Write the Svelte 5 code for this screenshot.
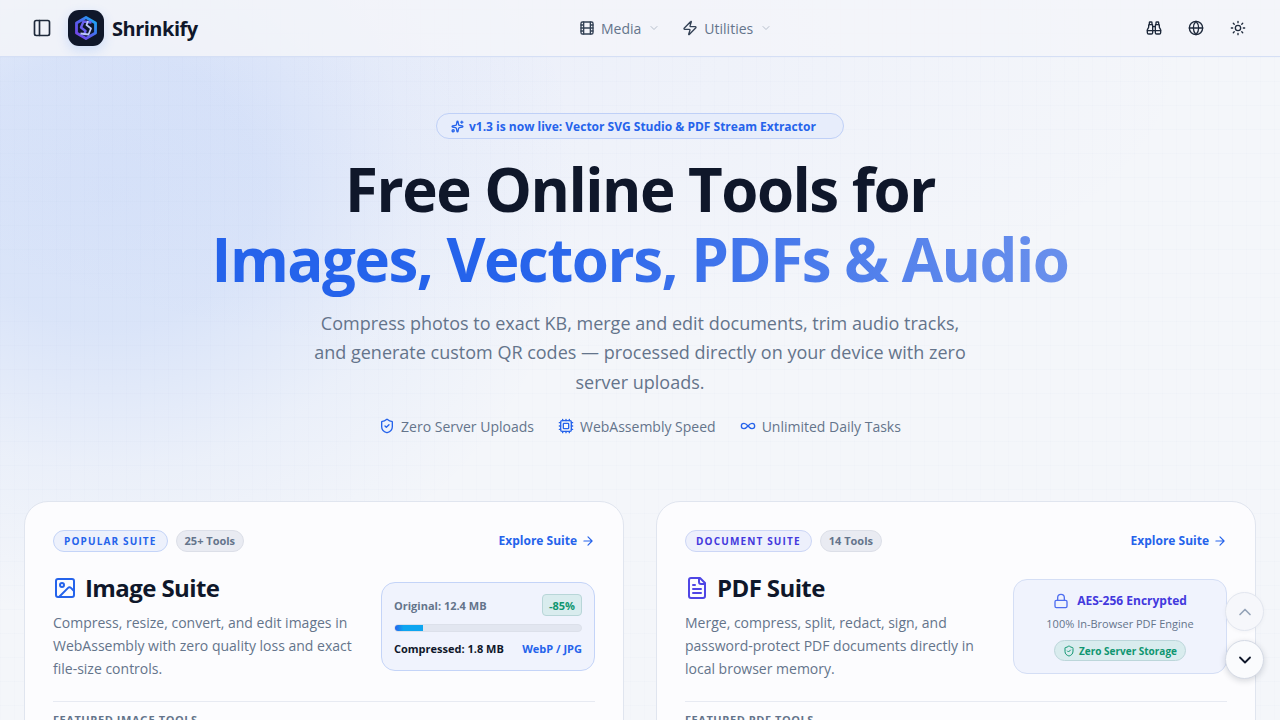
<script>
  const chips = [
    { label: 'Zero Server Uploads', icon: 'shield' },
    { label: 'WebAssembly Speed', icon: 'cpu' },
    { label: 'Unlimited Daily Tasks', icon: 'inf' }
  ];
</script>

<div class="page">
  <header class="topbar">
    <div class="left">
      <button class="iconbtn sidebar" aria-label="Toggle sidebar">
        <svg width="20" height="20" viewBox="0 0 24 24" fill="none" stroke="currentColor" stroke-width="2" stroke-linecap="round" stroke-linejoin="round"><rect x="3" y="3" width="18" height="18" rx="2"/><path d="M9 3v18"/></svg>
      </button>
      <div class="logo">
        <svg width="26" height="26" viewBox="0 0 26 26" fill="none" stroke-linejoin="round">
          <defs>
            <linearGradient id="lg" x1="0" y1="1" x2="1" y2="0"><stop offset="0" stop-color="#7a3fe4"/><stop offset="0.5" stop-color="#4f63ee"/><stop offset="1" stop-color="#12b4f6"/></linearGradient>
          </defs>
          <path d="M13 2.500 22.500 8V18L13 23.500 3.500 18V8Z" stroke="url(#lg)" stroke-width="2.800"/>
          <path d="M18.500 7.500 10.500 6.500 8 12.500 12.500 16 11 20" stroke="#6a60ee" stroke-width="2.400"/>
          <path d="M7.500 18.500 15.500 19.500 18 13.500 13.500 10 15 6" stroke="#bcc8fb" stroke-width="1.800"/>
        </svg>
      </div>
      <span class="brand">Shrinkify</span>
    </div>
    <nav class="nav">
      <button class="navitem">
        <svg width="16" height="16" viewBox="0 0 24 24" fill="none" stroke="currentColor" stroke-width="2" stroke-linecap="round" stroke-linejoin="round" class="navicon"><rect x="3" y="3" width="18" height="18" rx="2"/><path d="M7 3v18M17 3v18M3 12h18M3 7.500h4M3 16.500h4M17 7.500h4M17 16.500h4"/></svg>
        <span>Media</span>
        <svg class="chev" width="12" height="12" viewBox="0 0 24 24" fill="none" stroke="currentColor" stroke-width="2" stroke-linecap="round" stroke-linejoin="round"><path d="m6 9 6 6 6-6"/></svg>
      </button>
      <button class="navitem">
        <svg width="16" height="16" viewBox="0 0 24 24" fill="none" stroke="currentColor" stroke-width="2" stroke-linecap="round" stroke-linejoin="round" class="navicon"><path d="M4 14a1 1 0 0 1-.780-1.630l9.900-10.200a.500.500 0 0 1 .860.460l-1.920 6.020A1 1 0 0 0 13 10h7a1 1 0 0 1 .780 1.630l-9.900 10.200a.500.500 0 0 1-.860-.460l1.920-6.020A1 1 0 0 0 11 14z"/></svg>
        <span>Utilities</span>
        <svg class="chev" width="12" height="12" viewBox="0 0 24 24" fill="none" stroke="currentColor" stroke-width="2" stroke-linecap="round" stroke-linejoin="round"><path d="m6 9 6 6 6-6"/></svg>
      </button>
    </nav>
    <div class="right">
      <button class="iconbtn" aria-label="Search">
        <svg width="16" height="16" viewBox="0 0 24 24" fill="none" stroke="currentColor" stroke-width="2" stroke-linecap="round" stroke-linejoin="round"><path d="M10 10h4"/><path d="M19 7V4a1 1 0 0 0-1-1h-2a1 1 0 0 0-1 1v3"/><path d="M20 21a2 2 0 0 0 2-2v-3.851c0-1.390-2-2.962-2-4.829V8a1 1 0 0 0-1-1h-4a1 1 0 0 0-1 1v11a2 2 0 0 0 2 2z"/><path d="M22 16H2"/><path d="M4 21a2 2 0 0 1-2-2v-3.851c0-1.390 2-2.962 2-4.829V8a1 1 0 0 1 1-1h4a1 1 0 0 1 1 1v11a2 2 0 0 1-2 2z"/><path d="M9 7V4a1 1 0 0 0-1-1H6a1 1 0 0 0-1 1v3"/></svg>
      </button>
      <button class="iconbtn" aria-label="Language">
        <svg width="16" height="16" viewBox="0 0 24 24" fill="none" stroke="currentColor" stroke-width="2" stroke-linecap="round" stroke-linejoin="round"><circle cx="12" cy="12" r="10"/><path d="M12 2a14.500 14.500 0 0 0 0 20 14.500 14.500 0 0 0 0-20"/><path d="M2 12h20"/></svg>
      </button>
      <button class="iconbtn" aria-label="Theme">
        <svg width="16" height="16" viewBox="0 0 24 24" fill="none" stroke="currentColor" stroke-width="2" stroke-linecap="round" stroke-linejoin="round"><circle cx="12" cy="12" r="4"/><path d="M12 2v2M12 20v2M4.930 4.930l1.410 1.410M17.660 17.660l1.410 1.410M2 12h2M20 12h2M6.340 17.660l-1.410 1.410M19.070 4.930l-1.410 1.410"/></svg>
      </button>
    </div>
  </header>

  <section class="hero">
    <div class="pill">
      <svg width="13" height="13" viewBox="0 0 24 24" fill="none" stroke="currentColor" stroke-width="2.400" stroke-linecap="round" stroke-linejoin="round"><path d="M11.017 2.814a1 1 0 0 1 1.966 0l1.051 5.558a2 2 0 0 0 1.594 1.594l5.558 1.051a1 1 0 0 1 0 1.966l-5.558 1.051a2 2 0 0 0-1.594 1.594l-1.051 5.558a1 1 0 0 1-1.966 0l-1.051-5.558a2 2 0 0 0-1.594-1.594l-5.558-1.051a1 1 0 0 1 0-1.966l5.558-1.051a2 2 0 0 0 1.594-1.594z"/><path d="M20 2v4M22 4h-4"/><circle cx="4" cy="20" r="2"/></svg>
      <span>v1.3 is now live: Vector SVG Studio &amp; PDF Stream Extractor</span>
    </div>
    <h1>Free Online Tools for<br /><span class="grad">Images, Vectors, PDFs &amp; Audio</span></h1>
    <p class="lead">Compress photos to exact KB, merge and edit documents, trim audio tracks, and generate custom QR codes — processed directly on your device with zero server uploads.</p>
    <ul class="chips">
      {#each chips as c}
        <li>
          {#if c.icon === 'shield'}
            <svg width="16" height="16" viewBox="0 0 24 24" fill="none" stroke="currentColor" stroke-width="2" stroke-linecap="round" stroke-linejoin="round"><path d="M20 13c0 5-3.500 7.500-7.660 8.950a1 1 0 0 1-.670-.010C7.500 20.500 4 18 4 13V6a1 1 0 0 1 1-1c2 0 4.500-1.200 6.240-2.720a1.170 1.170 0 0 1 1.520 0C14.510 3.810 17 5 19 5a1 1 0 0 1 1 1z"/><path d="m9 12 2 2 4-4"/></svg>
          {:else if c.icon === 'cpu'}
            <svg width="16" height="16" viewBox="0 0 24 24" fill="none" stroke="currentColor" stroke-width="2" stroke-linecap="round" stroke-linejoin="round"><rect x="4" y="4" width="16" height="16" rx="2"/><rect x="8" y="8" width="8" height="8" rx="1"/><path d="M12 20v2M12 2v2M17 20v2M17 2v2M2 12h2M2 17h2M2 7h2M20 12h2M20 17h2M20 7h2M7 20v2M7 2v2"/></svg>
          {:else}
            <svg width="16" height="16" viewBox="0 0 24 24" fill="none" stroke="currentColor" stroke-width="2" stroke-linecap="round" stroke-linejoin="round"><path d="M6 16c5 0 7-8 12-8a4 4 0 0 1 0 8c-5 0-7-8-12-8a4 4 0 1 0 0 8"/></svg>
          {/if}
          <span>{c.label}</span>
        </li>
      {/each}
    </ul>
  </section>

  <section class="cards">
    <article class="card">
      <div class="cardtop">
        <div class="tags">
          <span class="tag blue">POPULAR SUITE</span>
          <span class="tag grey">25+ Tools</span>
        </div>
        <a class="explore blue-t" href="#image">Explore Suite
          <svg width="14" height="14" viewBox="0 0 24 24" fill="none" stroke="currentColor" stroke-width="2" stroke-linecap="round" stroke-linejoin="round"><path d="M5 12h14M12 5l7 7-7 7"/></svg>
        </a>
      </div>
      <div class="cardmain">
        <div class="cardtext">
          <h2>
            <svg class="blue-t" width="24" height="24" viewBox="0 0 24 24" fill="none" stroke="currentColor" stroke-width="2" stroke-linecap="round" stroke-linejoin="round"><rect x="3" y="3" width="18" height="18" rx="2"/><circle cx="9" cy="9" r="2"/><path d="m21 15-3.090-3.090a2 2 0 0 0-2.820 0L6 21"/></svg>
            Image Suite
          </h2>
          <p>Compress, resize, convert, and edit images in WebAssembly with zero quality loss and exact file-size controls.</p>
        </div>
        <div class="widget w-image">
          <div class="wrow">
            <span class="orig">Original: 12.4 MB</span>
            <span class="delta">-85%</span>
          </div>
          <div class="bar"><div class="fill" style="width: 15%"></div></div>
          <div class="wrow">
            <span class="comp">Compressed: 1.8 MB</span>
            <span class="fmt">WebP / JPG</span>
          </div>
        </div>
      </div>
      <div class="feat">FEATURED IMAGE TOOLS</div>
    </article>

    <article class="card">
      <div class="cardtop">
        <div class="tags">
          <span class="tag indigo">DOCUMENT SUITE</span>
          <span class="tag grey">14 Tools</span>
        </div>
        <a class="explore blue-t" href="#pdf">Explore Suite
          <svg width="14" height="14" viewBox="0 0 24 24" fill="none" stroke="currentColor" stroke-width="2" stroke-linecap="round" stroke-linejoin="round"><path d="M5 12h14M12 5l7 7-7 7"/></svg>
        </a>
      </div>
      <div class="cardmain">
        <div class="cardtext">
          <h2>
            <svg class="indigo-t" width="24" height="24" viewBox="0 0 24 24" fill="none" stroke="currentColor" stroke-width="2" stroke-linecap="round" stroke-linejoin="round"><path d="M15 2H6a2 2 0 0 0-2 2v16a2 2 0 0 0 2 2h12a2 2 0 0 0 2-2V7z"/><path d="M14 2v4a2 2 0 0 0 2 2h4M10 9H8M16 13H8M16 17H8"/></svg>
            PDF Suite
          </h2>
          <p>Merge, compress, split, redact, sign, and password-protect PDF documents directly in local browser memory.</p>
        </div>
        <div class="widget w-pdf">
          <div class="aes">
            <svg width="16" height="16" viewBox="0 0 24 24" fill="none" stroke="currentColor" stroke-width="2" stroke-linecap="round" stroke-linejoin="round"><rect x="3" y="11" width="18" height="11" rx="2"/><path d="M7 11V7a5 5 0 0 1 10 0v4"/></svg>
            <span>AES-256 Encrypted</span>
          </div>
          <div class="engine">100% In-Browser PDF Engine</div>
          <div class="storage">
            <svg width="12" height="12" viewBox="0 0 24 24" fill="none" stroke="currentColor" stroke-width="2" stroke-linecap="round" stroke-linejoin="round"><path d="M20 13c0 5-3.500 7.500-7.660 8.950a1 1 0 0 1-.670-.010C7.500 20.500 4 18 4 13V6a1 1 0 0 1 1-1c2 0 4.500-1.200 6.240-2.720a1.170 1.170 0 0 1 1.520 0C14.510 3.810 17 5 19 5a1 1 0 0 1 1 1z"/><path d="m9 12 2 2 4-4"/></svg>
            <span>Zero Server Storage</span>
          </div>
        </div>
      </div>
      <div class="feat">FEATURED PDF TOOLS</div>
    </article>
  </section>

  <div class="scrollers">
    <button class="sbtn up" aria-label="Scroll up">
      <svg width="20" height="20" viewBox="0 0 24 24" fill="none" stroke="currentColor" stroke-width="2" stroke-linecap="round" stroke-linejoin="round"><path d="m18 15-6-6-6 6"/></svg>
    </button>
    <button class="sbtn down" aria-label="Scroll down">
      <svg width="20" height="20" viewBox="0 0 24 24" fill="none" stroke="currentColor" stroke-width="2.200" stroke-linecap="round" stroke-linejoin="round"><path d="m6 9 6 6 6-6"/></svg>
    </button>
  </div>
</div>

<style>
  :global(body) {
    margin: 0;
    overflow: hidden;
    background: #f3f5fa;
  }
  * { box-sizing: border-box; }
  button {
    font: inherit;
    background: none;
    border: 0;
    padding: 0;
    color: inherit;
  }
  .page {
    position: relative;
    height: 720px;
    overflow: hidden;
    font-family: "Open Sans", sans-serif;
    color: #0f172a;
    background-color: #f4f6fa;
    background-image:
      linear-gradient(rgba(100,116,180,0.02) 1px, transparent 1px),
      linear-gradient(90deg, rgba(100,116,180,0.012) 1px, transparent 1px),
      radial-gradient(ellipse 470px 430px at 110px 190px, rgba(59,120,240,0.155) 0%, rgba(59,120,240,0.14) 32%, rgba(59,120,240,0.05) 65%, rgba(59,120,240,0) 100%),
      radial-gradient(ellipse 700px 300px at 500px 60px, rgba(99,130,246,0.05), rgba(99,130,246,0) 100%);
    background-size: 14px 24px, 14px 24px, auto, auto;
    background-position: 0 9px, 0 0, 0 0, 0 0;
  }
  .topbar {
    height: 57px;
    display: grid;
    grid-template-columns: 544px auto 1fr;
    align-items: center;
    padding: 0 24px;
    background: rgba(243,244,249,0.85);
    border-bottom: 1px solid #d5dff5;
  }
  .left { display: flex; align-items: center; }
  .iconbtn {
    width: 36px;
    height: 36px;
    display: flex;
    align-items: center;
    justify-content: center;
    color: #1e293b;
  }
  .sidebar { margin-right: 8px; }
  .logo {
    width: 36px;
    height: 36px;
    border-radius: 11px;
    background: #0f172a;
    display: flex;
    align-items: center;
    justify-content: center;
    box-shadow: 0 4px 12px rgba(59,130,246,0.2);
  }
  .brand {
    margin-left: 8px;
    font-size: 20px;
    font-weight: 700;
    letter-spacing: -0.5px;
    color: #0f172a;
  }
  .nav { display: flex; }
  .navitem {
    height: 36px;
    padding: 0 11px;
    display: flex;
    align-items: center;
    gap: 6px;
    font-size: 14px;
    color: #64748b;
  }
  .navicon { color: #334155; }
  .chev { color: #b6bfcc; margin-left: 1px; }
  .right {
    display: flex;
    justify-content: flex-end;
    gap: 6px;
  }
  .hero {
    display: flex;
    flex-direction: column;
    align-items: center;
    padding-top: 56px;
  }
  .pill {
    width: 408px;
    height: 26px;
    border-radius: 13px;
    border: 1px solid #bfd0f7;
    background: #e7edfb;
    color: #2563eb;
    font-size: 12px;
    font-weight: 700;
    display: flex;
    align-items: center;
    padding-left: 14px;
    gap: 5px;
  }
  h1 {
    margin: 15px 0 0;
    font-size: 60px;
    line-height: 70px;
    font-weight: 700;
    letter-spacing: -1.5px;
    text-align: center;
    color: #0f172a;
  }
  .grad {
    background: linear-gradient(90deg, #2563eb 0%, #2563eb 35%, #6a90ec 100%);
    -webkit-background-clip: text;
    background-clip: text;
    color: transparent;
  }
  .lead {
    margin: 15px 0 0;
    width: 672px;
    font-size: 18px;
    line-height: 29.25px;
    text-align: center;
    color: #64748b;
  }
  .chips {
    list-style: none;
    margin: 20px 0 0;
    padding: 0;
    display: flex;
    gap: 24px;
  }
  .chips li {
    display: flex;
    align-items: center;
    gap: 6px;
    font-size: 14px;
    color: #64748b;
  }
  .chips svg { color: #2563eb; }
  .cards {
    margin-top: 65px;
    padding: 0 24px;
    display: grid;
    grid-template-columns: 600px 600px;
    gap: 32px;
  }
  .card {
    height: 400px;
    padding: 28px;
    border-radius: 24px;
    border: 1px solid #e0e5ef;
    background: #fcfcfe;
  }
  .cardtop {
    display: flex;
    justify-content: space-between;
    align-items: center;
  }
  .tags { display: flex; gap: 8px; }
  .tag {
    height: 22px;
    padding: 0 10px;
    border-radius: 11px;
    font-size: 10px;
    font-weight: 700;
    display: flex;
    align-items: center;
    border: 1px solid;
  }
  .tag.blue { color: #2563eb; background: #edf1fc; border-color: #c4d4f8; letter-spacing: 1.15px; }
  .tag.indigo { color: #4338dd; background: #edf0fc; border-color: #ccd6f6; letter-spacing: 1.15px; }
  .tag.grey { color: #64748b; background: #e9ebf2; border-color: #dcdfe8; font-size: 11px; padding: 0 8px; }
  .explore {
    display: flex;
    align-items: center;
    gap: 4px;
    font-size: 12px;
    font-weight: 700;
    text-decoration: none;
  }
  .blue-t { color: #2563eb; }
  .indigo-t { color: #4f46e5; }
  .cardmain {
    margin-top: 20px;
    display: flex;
    justify-content: space-between;
    align-items: center;
    gap: 24px;
    padding-bottom: 21px;
    border-bottom: 1px solid #e7eaf2;
  }
  .cardtext { width: 306px; }
  h2 {
    margin: 0;
    display: flex;
    align-items: center;
    gap: 8px;
    font-size: 24px;
    line-height: 32px;
    font-weight: 700;
    letter-spacing: -0.6px;
    color: #0f172a;
  }
  .cardtext p {
    margin: 7px 0 0;
    font-size: 14px;
    line-height: 23px;
    color: #64748b;
  }
  .widget {
    flex: none;
    width: 214px;
    margin-top: 2px;
    border-radius: 14px;
    border: 1px solid #c4d4f8;
    background: #f0f3fd;
  }
  .w-image {
    height: 89px;
    padding: 11px 12px 0;
    display: flex;
    flex-direction: column;
  }
  .wrow {
    display: flex;
    justify-content: space-between;
    align-items: center;
    font-size: 11px;
    font-weight: 700;
  }
  .orig { color: #64748b; }
  .delta {
    height: 22px;
    padding: 0 6px;
    display: flex;
    align-items: center;
    border-radius: 4px;
    color: #0f9670;
    background: #d9ecee;
    border: 1px solid #b8d6d8;
  }
  .bar {
    margin: 8px 0 9px;
    height: 8px;
    border-radius: 4px;
    background: #e2e6f0;
    border: 1px solid #dce0ea;
    overflow: hidden;
  }
  .fill {
    height: 100%;
    background: linear-gradient(90deg, #2563eb 0, #0ea5f0 30%, #0ea5f0 100%);
  }
  .comp { color: #0f172a; }
  .fmt { color: #2563eb; }
  .w-pdf {
    height: 95px;
    border-color: #d4def5;
    display: flex;
    flex-direction: column;
    align-items: center;
    padding-top: 12px;
  }
  .aes {
    display: flex;
    align-items: center;
    gap: 8px;
    font-size: 12px;
    font-weight: 700;
    color: #4338dd;
  }
  .aes svg { color: #4f6ef0; }
  .engine {
    margin-top: 7px;
    font-size: 11px;
    color: #64748b;
  }
  .storage {
    margin-top: 9px;
    height: 21px;
    padding: 0 8px;
    border-radius: 11px;
    display: flex;
    align-items: center;
    gap: 4px;
    font-size: 10px;
    font-weight: 700;
    color: #0f9670;
    background: #d9ecee;
    border: 1px solid #bcd6da;
  }
  .feat {
    margin-top: 10px;
    font-size: 11px;
    font-weight: 700;
    letter-spacing: 0.55px;
    color: #64748b;
  }
  .scrollers {
    position: absolute;
    right: 16px;
    top: 592px;
    display: flex;
    flex-direction: column;
    gap: 9px;
  }
  .sbtn {
    width: 39px;
    height: 39px;
    border-radius: 50%;
    display: flex;
    align-items: center;
    justify-content: center;
    border: 1px solid #e2e6ef;
  }
  .up { background: #f6f7fb; color: #94a3b8; box-shadow: 0 1px 4px rgba(15,23,42,0.04); }
  .down { background: #fafbfd; color: #0f172a; border-color: #d5dae5; box-shadow: 0 2px 6px rgba(15,23,42,0.16); }
</style>
